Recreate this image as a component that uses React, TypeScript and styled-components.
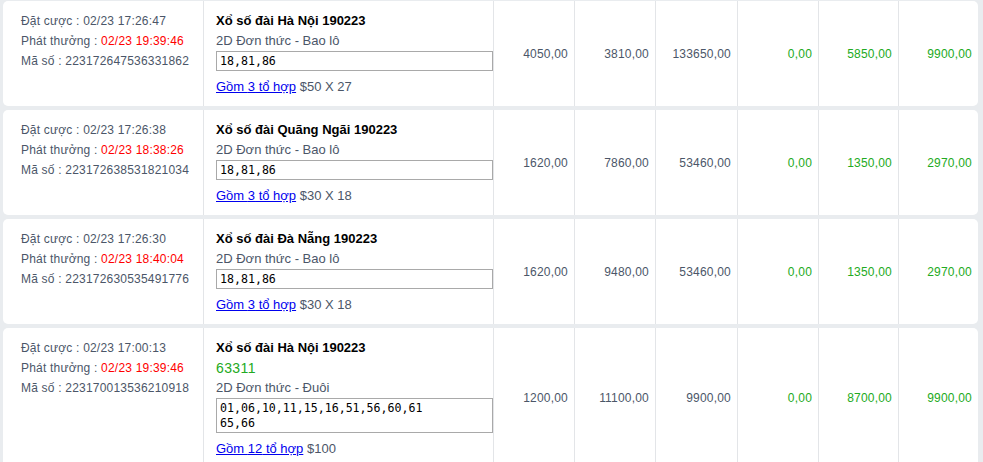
import React from "react";
import styled, { createGlobalStyle } from "styled-components";

const GlobalStyle = createGlobalStyle`
  html, body {
    margin: 0;
    padding: 0;
    background: #e9ecef;
    font-family: "Liberation Sans", Arial, sans-serif;
  }
`;

const List = styled.div`
  display: flex;
  flex-direction: column;
  gap: 4px;
  padding: 1px 5px 0 3px;
`;

const Card = styled.div`
  display: flex;
  background: #ffffff;
  border-radius: 5px;
  overflow: hidden;
`;

const InfoCell = styled.div`
  flex: 0 0 200px;
  box-sizing: border-box;
  padding: 10px 0 9px 18px;
  font-size: 12px;
  letter-spacing: 0.2px;
  line-height: 20px;
  color: #4b5668;
`;

const InfoLine = styled.div`
  white-space: nowrap;
`;

const Red = styled.span`
  color: #ff0000;
`;

const DetailCell = styled.div`
  flex: 0 0 290px;
  box-sizing: border-box;
  border-left: 1px solid #e3e5e8;
  padding: 10px 0 9px 12px;
`;

const Title = styled.div`
  font-weight: bold;
  font-size: 13px;
  line-height: 20px;
  color: #000;
  white-space: nowrap;
`;

const Result = styled.div`
  font-size: 14px;
  letter-spacing: 0.4px;
  line-height: 20px;
  color: #22aa22;
`;

const Sub = styled.div`
  font-size: 13px;
  line-height: 20px;
  color: #4b5668;
`;

const NumsBox = styled.div`
  width: 277px;
  box-sizing: border-box;
  border: 1px solid #a9a9a9;
  padding: 2px 3px 1px 3px;
  font-family: "DejaVu Sans Mono", "Liberation Mono", monospace;
  font-size: 11.6px;
  line-height: 15px;
  color: #000;
  white-space: pre;
`;

const LinkLine = styled.div`
  margin-top: 6px;
  font-size: 13px;
  line-height: 20px;
  color: #4b5668;
  white-space: nowrap;
`;

const Link = styled.a`
  color: #0000ee;
  text-decoration: underline;
  cursor: pointer;
`;

const NumCell = styled.div<{ $w: number; $green?: boolean }>`
  flex: 0 0 ${(p) => p.$w}px;
  box-sizing: border-box;
  border-left: 1px solid #e3e5e8;
  display: flex;
  align-items: center;
  justify-content: flex-end;
  padding-right: 6px;
  font-size: 12px;
  letter-spacing: 0.2px;
  color: ${(p) => (p.$green ? "#22aa22" : "#4b5668")};
`;

type Row = {
  bet: string;
  pay: string;
  code: string;
  title: string;
  result?: string;
  kind: string;
  nums: string;
  combos: number;
  price: string;
  values: string[];
};

const rows: Row[] = [
  {
    bet: "02/23 17:26:47",
    pay: "02/23 19:39:46",
    code: "223172647536331862",
    title: "Xổ số đài Hà Nội 190223",
    kind: "2D Đơn thức - Bao lô",
    nums: "18,81,86",
    combos: 3,
    price: "$50 X 27",
    values: ["4050,00", "3810,00", "133650,00", "0,00", "5850,00", "9900,00"],
  },
  {
    bet: "02/23 17:26:38",
    pay: "02/23 18:38:26",
    code: "223172638531821034",
    title: "Xổ số đài Quãng Ngãi 190223",
    kind: "2D Đơn thức - Bao lô",
    nums: "18,81,86",
    combos: 3,
    price: "$30 X 18",
    values: ["1620,00", "7860,00", "53460,00", "0,00", "1350,00", "2970,00"],
  },
  {
    bet: "02/23 17:26:30",
    pay: "02/23 18:40:04",
    code: "223172630535491776",
    title: "Xổ số đài Đà Nẵng 190223",
    kind: "2D Đơn thức - Bao lô",
    nums: "18,81,86",
    combos: 3,
    price: "$30 X 18",
    values: ["1620,00", "9480,00", "53460,00", "0,00", "1350,00", "2970,00"],
  },
  {
    bet: "02/23 17:00:13",
    pay: "02/23 19:39:46",
    code: "223170013536210918",
    title: "Xổ số đài Hà Nội 190223",
    result: "63311",
    kind: "2D Đơn thức - Đuôi",
    nums: "01,06,10,11,15,16,51,56,60,61\n65,66",
    combos: 12,
    price: "$100",
    values: ["1200,00", "11100,00", "9900,00", "0,00", "8700,00", "9900,00"],
  },
];

const widths = [81, 81, 82, 81, 80, 80];

export default function App() {
  return (
    <>
      <GlobalStyle />
      <List>
        {rows.map((r, i) => (
          <Card key={i}>
            <InfoCell>
              <InfoLine>Đặt cược : {r.bet}</InfoLine>
              <InfoLine>
                Phát thưởng : <Red>{r.pay}</Red>
              </InfoLine>
              <InfoLine>Mã số : {r.code}</InfoLine>
            </InfoCell>
            <DetailCell>
              <Title>{r.title}</Title>
              {r.result && <Result>{r.result}</Result>}
              <Sub>{r.kind}</Sub>
              <NumsBox>{r.nums}</NumsBox>
              <LinkLine>
                <Link>Gồm {r.combos} tổ hợp</Link> {r.price}
              </LinkLine>
            </DetailCell>
            {r.values.map((v, j) => (
              <NumCell key={j} $w={widths[j]} $green={j >= 3}>
                {v}
              </NumCell>
            ))}
          </Card>
        ))}
      </List>
    </>
  );
}
